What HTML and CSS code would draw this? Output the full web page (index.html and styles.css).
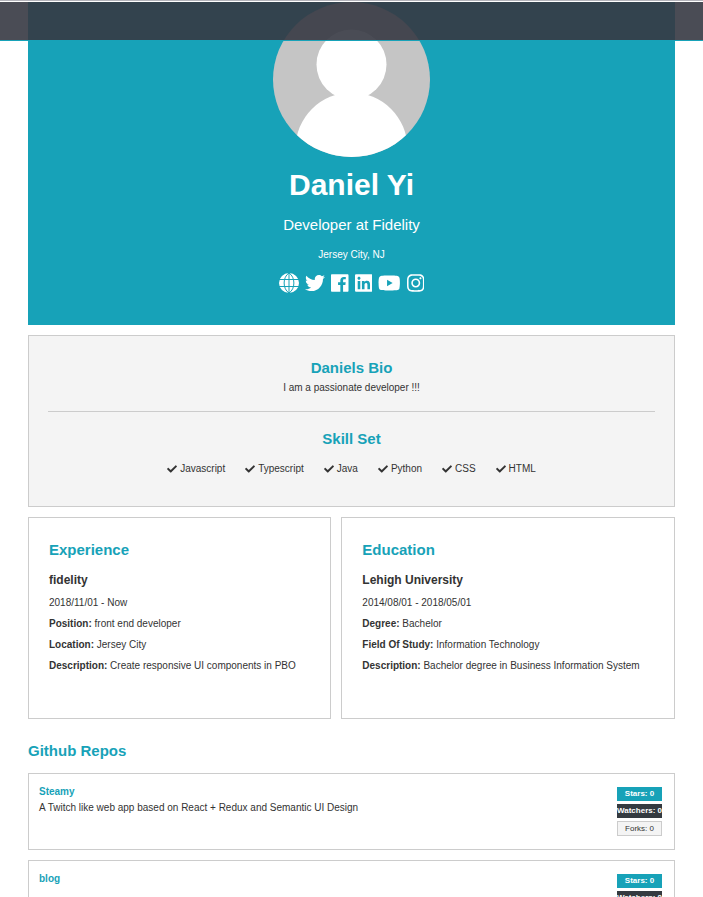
FILE: index.html
```html
<!DOCTYPE html>
<html lang="en">
<head>
<meta charset="utf-8">
<meta name="viewport" content="width=device-width, initial-scale=1">
<title>Daniel Yi</title>
<link rel="stylesheet" href="styles.css">
</head>
<body>
<svg class="sprite" aria-hidden="true">
  <symbol id="check" viewBox="0 0 512 512"><path d="M173.898 439.404l-166.4-166.4c-9.997-9.997-9.997-26.206 0-36.204l36.203-36.204c9.997-9.998 26.207-9.998 36.204 0L192 312.69 432.095 72.596c9.997-9.997 26.207-9.997 36.204 0l36.203 36.204c9.997 9.997 9.997 26.206 0 36.204l-294.4 294.401c-9.998 9.997-26.207 9.997-36.204-.001z"/></symbol>
</svg>
<header class="navbar"></header>
<main class="profile">
  <section class="hero">
    <svg class="avatar" viewBox="0 0 157 155" role="img" aria-label="Avatar">
      <clipPath id="round"><ellipse cx="78.5" cy="77.5" rx="78.5" ry="77.5"/></clipPath>
      <g clip-path="url(#round)">
        <rect class="avatar-back" width="157" height="155"/>
        <circle class="avatar-front" cx="78.5" cy="62.500" r="35"/>
        <circle class="avatar-front" cx="78.5" cy="146.500" r="56"/>
      </g>
    </svg>
    <h1 class="name">Daniel Yi</h1>
    <p class="lead">Developer at Fidelity</p>
    <p class="place">Jersey City, NJ</p>
    <nav class="social">
      <a href="#" aria-label="Website"><svg viewBox="0 0 20 20"><circle cx="10" cy="10" r="10"/><path class="meridians" d="M0 6.500h20M0 13.500h20M10 0v20M10 0C3.500 4 3.500 16 10 20M10 0c6.500 4 6.500 16 0 20"/></svg></a>
      <a href="#" aria-label="Twitter"><svg viewBox="0 0 512 512"><path d="M459.37 151.716c.325 4.548.325 9.097.325 13.645 0 138.72-105.583 298.558-298.558 298.558-59.452 0-114.68-17.219-161.137-47.106 8.447.974 16.568 1.299 25.34 1.299 49.055 0 94.213-16.568 130.274-44.832-46.132-.975-84.792-31.188-98.112-72.772 6.498.974 12.995 1.624 19.818 1.624 9.421 0 18.843-1.3 27.614-3.573-48.081-9.747-84.143-51.98-84.143-102.985v-1.299c13.969 7.797 30.214 12.67 47.431 13.319-28.264-18.843-46.781-51.005-46.781-87.391 0-19.492 5.197-37.36 14.294-52.954 51.655 63.675 129.3 105.258 216.365 109.807-1.624-7.797-2.599-15.918-2.599-24.04 0-57.828 46.782-104.934 104.934-104.934 30.213 0 57.502 12.67 76.67 33.137 23.715-4.548 46.456-13.32 66.599-25.34-7.798 24.366-24.366 44.833-46.132 57.827 21.117-2.273 41.584-8.122 60.426-16.243-14.292 20.791-32.161 39.308-52.628 54.253z"/></svg></a>
      <a href="#" aria-label="Facebook"><svg viewBox="0 0 448 512"><path d="M448 56.7v398.5c0 13.7-11.1 24.7-24.7 24.7H309.1V306.5h58.2l8.7-67.6h-67v-43.2c0-19.6 5.4-32.9 33.5-32.9h35.8v-60.5c-6.2-.8-27.4-2.7-52.2-2.7-51.6 0-87 31.5-87 89.4v49.9h-58.4v67.6h58.4V480H24.7C11.1 480 0 468.9 0 455.3V56.7C0 43.1 11.1 32 24.7 32h398.5c13.7 0 24.8 11.1 24.8 24.7z"/></svg></a>
      <a href="#" aria-label="LinkedIn"><svg viewBox="0 0 448 512"><path d="M416 32H31.9C14.3 32 0 46.5 0 64.3v383.4C0 465.5 14.3 480 31.9 480H416c17.6 0 32-14.5 32-32.3V64.3c0-17.8-14.4-32.3-32-32.3zM135.4 416H69V202.2h66.5V416zm-33.2-243c-21.3 0-38.5-17.3-38.5-38.5S80.9 96 102.2 96c21.2 0 38.5 17.3 38.5 38.5 0 21.3-17.2 38.5-38.5 38.5zm282.1 243h-66.4V312c0-24.8-.5-56.7-34.5-56.7-34.6 0-39.9 27-39.9 54.9V416h-66.4V202.2h63.7v29.2h.9c8.9-16.8 30.6-34.5 62.9-34.5 67.2 0 79.7 44.3 79.7 101.9V416z"/></svg></a>
      <a href="#" aria-label="YouTube"><svg viewBox="0 0 576 512"><path d="M549.655 124.083c-6.281-23.65-24.787-42.276-48.284-48.597C458.781 64 288 64 288 64S117.22 64 74.629 75.486c-23.497 6.322-42.003 24.947-48.284 48.597-11.412 42.867-11.412 132.305-11.412 132.305s0 89.438 11.412 132.305c6.281 23.65 24.787 41.5 48.284 47.821C117.22 448 288 448 288 448s170.78 0 213.371-11.486c23.497-6.321 42.003-24.171 48.284-47.821 11.412-42.867 11.412-132.305 11.412-132.305s0-89.438-11.412-132.305zm-317.51 213.508V175.185l142.739 81.205-142.739 81.201z"/></svg></a>
      <a href="#" aria-label="Instagram"><svg viewBox="0 0 448 512"><path d="M224.1 141c-63.6 0-114.9 51.3-114.9 114.9s51.3 114.9 114.9 114.9S339 319.5 339 255.900 287.700 141 224.100 141zm0 189.600c-41.100 0-74.700-33.500-74.700-74.700s33.500-74.700 74.700-74.700 74.700 33.500 74.700 74.700-33.600 74.700-74.700 74.700zm146.400-194.300c0 14.900-12 26.800-26.800 26.800-14.900 0-26.800-12-26.800-26.800s12-26.800 26.800-26.800 26.800 12 26.800 26.800zm76.100 27.200c-1.700-35.900-9.900-67.700-36.200-93.900-26.200-26.200-58-34.400-93.900-36.200-37-2.100-147.900-2.100-184.900 0-35.800 1.700-67.600 9.900-93.900 36.100s-34.400 58-36.200 93.900c-2.100 37-2.100 147.900 0 184.900 1.700 35.900 9.900 67.700 36.200 93.900s58 34.400 93.900 36.200c37 2.100 147.900 2.100 184.900 0 35.900-1.700 67.700-9.900 93.900-36.200 26.200-26.200 34.400-58 36.200-93.900 2.100-37 2.100-147.800 0-184.800zM398.800 388c-7.800 19.600-22.900 34.700-42.600 42.600-29.500 11.700-99.500 9-132.100 9s-102.700 2.600-132.100-9c-19.600-7.800-34.700-22.900-42.600-42.600-11.700-29.500-9-99.500-9-132.100s-2.600-102.700 9-132.100c7.800-19.600 22.900-34.700 42.600-42.600 29.500-11.700 99.500-9 132.100-9s102.700-2.600 132.100 9c19.600 7.800 34.700 22.900 42.600 42.600 11.700 29.500 9 99.500 9 132.100s2.700 102.700-9 132.100z"/></svg></a>
    </nav>
  </section>

  <section class="box about">
    <h2>Daniels Bio</h2>
    <p>I am a passionate developer !!!</p>
    <hr>
    <h2>Skill Set</h2>
    <ul class="skills">
      <li><svg><use href="#check"/></svg>Javascript</li>
      <li><svg><use href="#check"/></svg>Typescript</li>
      <li><svg><use href="#check"/></svg>Java</li>
      <li><svg><use href="#check"/></svg>Python</li>
      <li><svg><use href="#check"/></svg>CSS</li>
      <li><svg><use href="#check"/></svg>HTML</li>
    </ul>
  </section>

  <div class="columns">
    <section class="box history">
      <h2>Experience</h2>
      <h3>fidelity</h3>
      <p>2018/11/01 - Now</p>
      <p><strong>Position:</strong> front end developer</p>
      <p><strong>Location:</strong> Jersey City</p>
      <p><strong>Description:</strong> Create responsive UI components in PBO</p>
    </section>
    <section class="box history">
      <h2>Education</h2>
      <h3>Lehigh University</h3>
      <p>2014/08/01 - 2018/05/01</p>
      <p><strong>Degree:</strong> Bachelor</p>
      <p><strong>Field Of Study:</strong> Information Technology</p>
      <p><strong>Description:</strong> Bachelor degree in Business Information System</p>
    </section>
  </div>

  <section class="repos">
    <h2>Github Repos</h2>
    <article class="box repo">
      <div>
        <h4><a href="#">Steamy</a></h4>
        <p>A Twitch like web app based on React + Redux and Semantic UI Design</p>
      </div>
      <ul class="badges">
        <li class="stars">Stars: 0</li>
        <li class="watchers">Watchers: 0</li>
        <li class="forks">Forks: 0</li>
      </ul>
    </article>
    <article class="box repo">
      <div>
        <h4><a href="#">blog</a></h4>
      </div>
      <ul class="badges">
        <li class="stars">Stars: 0</li>
        <li class="watchers">Watchers: 0</li>
        <li class="forks">Forks: 0</li>
      </ul>
    </article>
  </section>
</main>
</body>
</html>
```
FILE: styles.css
```css
:root {
  --primary: #17a2b8;
  --dark: #343a40;
  --light: #f4f4f4;
  --line: #ccc;
}

* {
  box-sizing: border-box;
  margin: 0;
  padding: 0;
}

body {
  background: #fff;
  border-top: 1px solid #b4b4bb;
  color: #333;
  font: 10px/16px "Liberation Sans", Arial, sans-serif;
}

ul {
  list-style: none;
}

a {
  color: inherit;
  text-decoration: none;
}

svg {
  display: block;
  fill: currentColor;
}

.sprite {
  position: absolute;
  width: 0;
  height: 0;
}

.navbar {
  position: fixed;
  top: 2px;
  left: 0;
  right: 0;
  z-index: 1;
  height: 39px;
  background: rgba(54, 57, 66, 0.9);
  background-clip: padding-box;
  border-bottom: 1px solid var(--primary);
}

.profile {
  padding: 1px 28px 20px;
}

.hero {
  display: flex;
  flex-direction: column;
  align-items: center;
  padding-bottom: 32px;
  margin-bottom: 10px;
  background: var(--primary);
  color: #fff;
  text-align: center;
}

.avatar {
  width: 157px;
}

.avatar-back {
  fill: #c5c5c5;
}

.avatar-front {
  fill: #fff;
}

.name {
  margin: 4px 0;
  font-size: 30px;
  line-height: 48px;
}

.lead {
  margin-bottom: 10px;
  font-size: 15px;
  line-height: 24px;
}

.place {
  margin-bottom: 10px;
}

.social {
  display: flex;
  gap: 6px;
}

.social svg {
  height: 20px;
}

.meridians {
  fill: none;
  stroke: var(--primary);
}

.box {
  padding: 20px 19px;
  border: 1px solid var(--line);
}

h2 {
  color: var(--primary);
  font-size: 15px;
  line-height: 24px;
}

.about {
  margin-bottom: 10px;
  background: var(--light);
  text-align: center;
}

hr {
  margin: 15px 0;
  border: 0;
  border-top: 1px solid var(--line);
}

.skills {
  display: flex;
  flex-wrap: wrap;
  justify-content: center;
  gap: 4px 20px;
  padding: 10px 0 9px;
}

.skills li {
  display: flex;
  align-items: center;
  gap: 3px;
}

.skills svg {
  width: 10px;
  height: 10px;
}

.columns {
  display: grid;
  grid-template-columns: 10fr 11fr;
  gap: 10px;
  margin-bottom: 20px;
}

.history {
  padding: 20px 20px 44px;
}

.history h3 {
  margin: 8px 0 5px;
  font-size: 12px;
  line-height: 20px;
}

.history p + p {
  margin-top: 5px;
}

.repo {
  display: flex;
  justify-content: space-between;
  margin-top: 10px;
  padding: 10px;
}

.repo h4 {
  color: var(--primary);
  font-size: 10px;
}

.badges {
  display: flex;
  flex-direction: column;
  gap: 3px;
  flex: none;
  width: 45px;
  margin: 3px 2px;
  font-size: 8px;
  line-height: 14px;
  text-align: center;
  white-space: nowrap;
}

.stars,
.watchers {
  color: #fff;
  font-weight: bold;
}

.stars {
  background: var(--primary);
}

.watchers {
  background: var(--dark);
}

.forks {
  background: var(--light);
  border: 1px solid var(--line);
  line-height: 13px;
}
```
